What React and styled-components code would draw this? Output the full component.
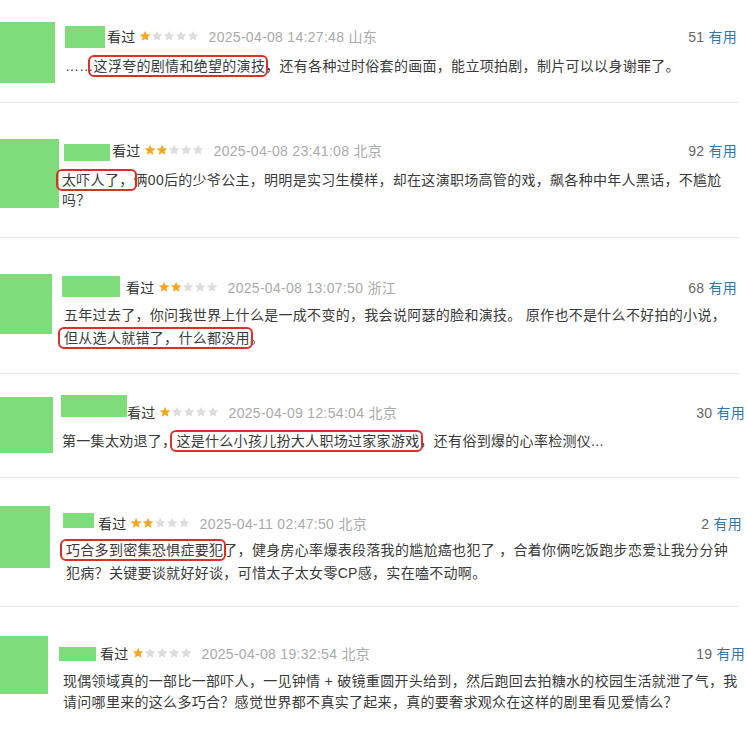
import React from "react";
import styled, { createGlobalStyle } from "styled-components";

const GlobalStyle = createGlobalStyle`
  html, body {
    margin: 0;
    padding: 0;
    background: #fff;
  }
  body {
    font-family: "Liberation Sans", "Noto Sans CJK SC", sans-serif;
    font-size: 14px;
    letter-spacing: 0.3px;
    color: #3a3a3a;
  }
`;

const reviews = [
  {
    h: 102, top: 22, avW: 55, avH: 61, left: 65, nameX: 65, nameW: 40, nameH: 22, nameDy: 1, nameGap: 2,
    metaY: 36, textY: 66, lh: 22, right: 10, textW: 680, stars: 1,
    date: "2025-04-08 14:27:48 山东", votes: 51,
    parts: ["……", { mark: "这浮夸的剧情和绝望的演技" }, "，还有各种过时俗套的画面，能立项拍剧，制片可以以身谢罪了。"],
  },
  {
    h: 134, top: 36, avW: 59, avH: 69, left: 62, nameX: 64, nameW: 46, nameH: 17, nameDy: 2, nameGap: 2,
    metaY: 47, textY: 77, lh: 20, right: 10, textW: 670, stars: 2,
    date: "2025-04-08 23:41:08 北京", votes: 92,
    parts: [{ mark: "太吓人了，" }, "俩00后的少爷公主，明明是实习生模样，却在这演职场高管的戏，飙各种中年人黑话，不尴尬吗？"],
  },
  {
    h: 135, top: 36, avW: 52, avH: 60, left: 64, nameX: 62, nameW: 58, nameH: 21, nameDy: -1, nameGap: 6,
    metaY: 49, textY: 77, lh: 23, right: 10, textW: 668, stars: 2,
    date: "2025-04-08 13:07:50 浙江", votes: 68,
    parts: ["五年过去了，你问我世界上什么是一成不变的，我会说阿瑟的脸和演技。 原作也不是什么不好拍的小说，", { mark: "但从选人就错了，什么都没用" }, "。"],
  },
  {
    h: 103, top: 23, avW: 53, avH: 56, left: 62, nameX: 61, nameW: 66, nameH: 22, nameDy: -6, nameGap: 0,
    metaY: 38, textY: 67, lh: 22, right: 2, textW: 680, stars: 1,
    date: "2025-04-09 12:54:04 北京", votes: 30,
    parts: ["第一集太劝退了，", { mark: "这是什么小孩儿扮大人职场过家家游戏" }, "，还有俗到爆的心率检测仪..."],
  },
  {
    h: 128, top: 28, avW: 50, avH: 62, left: 66, nameX: 63, nameW: 31, nameH: 15, nameDy: -3, nameGap: 4,
    metaY: 45, textY: 72, lh: 23, right: 5, textW: 668, stars: 2,
    date: "2025-04-11 02:47:50 北京", votes: 2,
    parts: [{ mark: "巧合多到密集恐惧症要犯" }, "了，健身房心率爆表段落我的尴尬癌也犯了 ，合着你俩吃饭跑步恋爱让我分分钟犯病？关键要谈就好好谈，可惜太子太女零CP感，实在嗑不动啊。"],
  },
  {
    h: 127, top: 29, avW: 48, avH: 58, left: 63, nameX: 59, nameW: 37, nameH: 14, nameDy: 1, nameGap: 4,
    metaY: 46, textY: 74, lh: 21, right: 2, textW: 681, stars: 1,
    date: "2025-04-08 19:32:54 北京", votes: 19,
    parts: ["现偶领域真的一部比一部吓人，一见钟情 + 破镜重圆开头给到，然后跑回去拍糖水的校园生活就泄了气，我请问哪里来的这么多巧合？感觉世界都不真实了起来，真的要奢求观众在这样的剧里看见爱情么？"],
  },
];

const Page = styled.div`
  width: 747px;
  height: 734px;
  overflow: hidden;
  background: #fff;
`;

const Review = styled.div`
  display: flex;
  height: ${(p) => p.$h}px;
  box-sizing: border-box;
  padding-top: ${(p) => p.$top}px;
  padding-right: ${(p) => p.$right}px;
`;

const Divider = styled.div`
  height: 1px;
  margin-right: 8px;
  background: #e8e8e8;
`;

const Avatar = styled.div`
  flex: none;
  width: ${(p) => p.$w}px;
  height: ${(p) => p.$h}px;
  background: #7edc7b;
`;

const Body = styled.div`
  flex: 1;
  min-width: 0;
  margin-left: ${(p) => p.$ml}px;
  margin-top: ${(p) => p.$mt}px;
`;

const Meta = styled.div`
  display: flex;
  align-items: center;
  height: 20px;
  white-space: nowrap;
`;

const NameBlock = styled.div`
  flex: none;
  width: ${(p) => p.$w}px;
  height: ${(p) => p.$h}px;
  margin-left: ${(p) => p.$ml}px;
  margin-right: ${(p) => p.$gap}px;
  margin-top: ${(p) => p.$dy * 2}px;
  background: #7edc7b;
`;

const Watched = styled.span`
  color: #333;
`;

const Stars = styled.span`
  display: inline-flex;
  margin-left: 3px;
  margin-right: 9px;
`;

const DateText = styled.span`
  color: #aaa;
`;

const Votes = styled.span`
  margin-left: auto;
  color: #666;
  b {
    font-weight: normal;
    color: #3377aa;
    margin-left: 4px;
  }
`;

const Content = styled.p`
  margin: ${(p) => p.$mt}px 0 0;
  width: ${(p) => p.$w}px;
  line-height: ${(p) => p.$lh}px;
  color: #3a3a3a;
`;

const Mark = styled.span`
  padding: 1px 1px 1px 4px;
  margin: 0 -1px 0 -4px;
  border-radius: 4px;
  outline: 2px solid #db2f2a;
`;

const Star = ({ on }) => (
  <svg width="12.2" height="12" viewBox="0 0 24 24">
    <path
      d="M12 1.5l3.1 7 7.6.7-5.8 5 1.8 7.4L12 17.7l-6.7 3.9 1.8-7.4-5.8-5 7.6-.7z"
      fill={on ? "#f3a623" : "#dcdcdc"}
    />
  </svg>
);

const Rating = ({ n }) => (
  <Stars>
    {[0, 1, 2, 3, 4].map((i) => (
      <Star key={i} on={i < n} />
    ))}
  </Stars>
);

const Item = ({ r }) => {
  const bodyTop = r.metaY - 10 - r.top;
  const textTop = r.textY - r.lh / 2 - (r.metaY + 10);
  return (
    <Review $h={r.h} $top={r.top} $right={r.right}>
      <Avatar $w={r.avW} $h={r.avH} />
      <Body $ml={r.left - r.avW} $mt={bodyTop}>
        <Meta>
          <NameBlock $w={r.nameW} $h={r.nameH} $ml={r.nameX - r.left} $gap={r.nameGap} $dy={r.nameDy} />
          <Watched>看过</Watched>
          <Rating n={r.stars} />
          <DateText>{r.date}</DateText>
          <Votes>
            {r.votes}<b>有用</b>
          </Votes>
        </Meta>
        <Content $mt={textTop} $w={r.textW} $lh={r.lh}>
          {r.parts.map((p, i) =>
            typeof p === "string" ? <React.Fragment key={i}>{p}</React.Fragment> : <Mark key={i}>{p.mark}</Mark>
          )}
        </Content>
      </Body>
    </Review>
  );
};

const App = () => (
  <>
    <GlobalStyle />
    <Page>
      {reviews.map((r, i) => (
        <React.Fragment key={i}>
          {i > 0 && <Divider />}
          <Item r={r} />
        </React.Fragment>
      ))}
    </Page>
  </>
);

export default App;
